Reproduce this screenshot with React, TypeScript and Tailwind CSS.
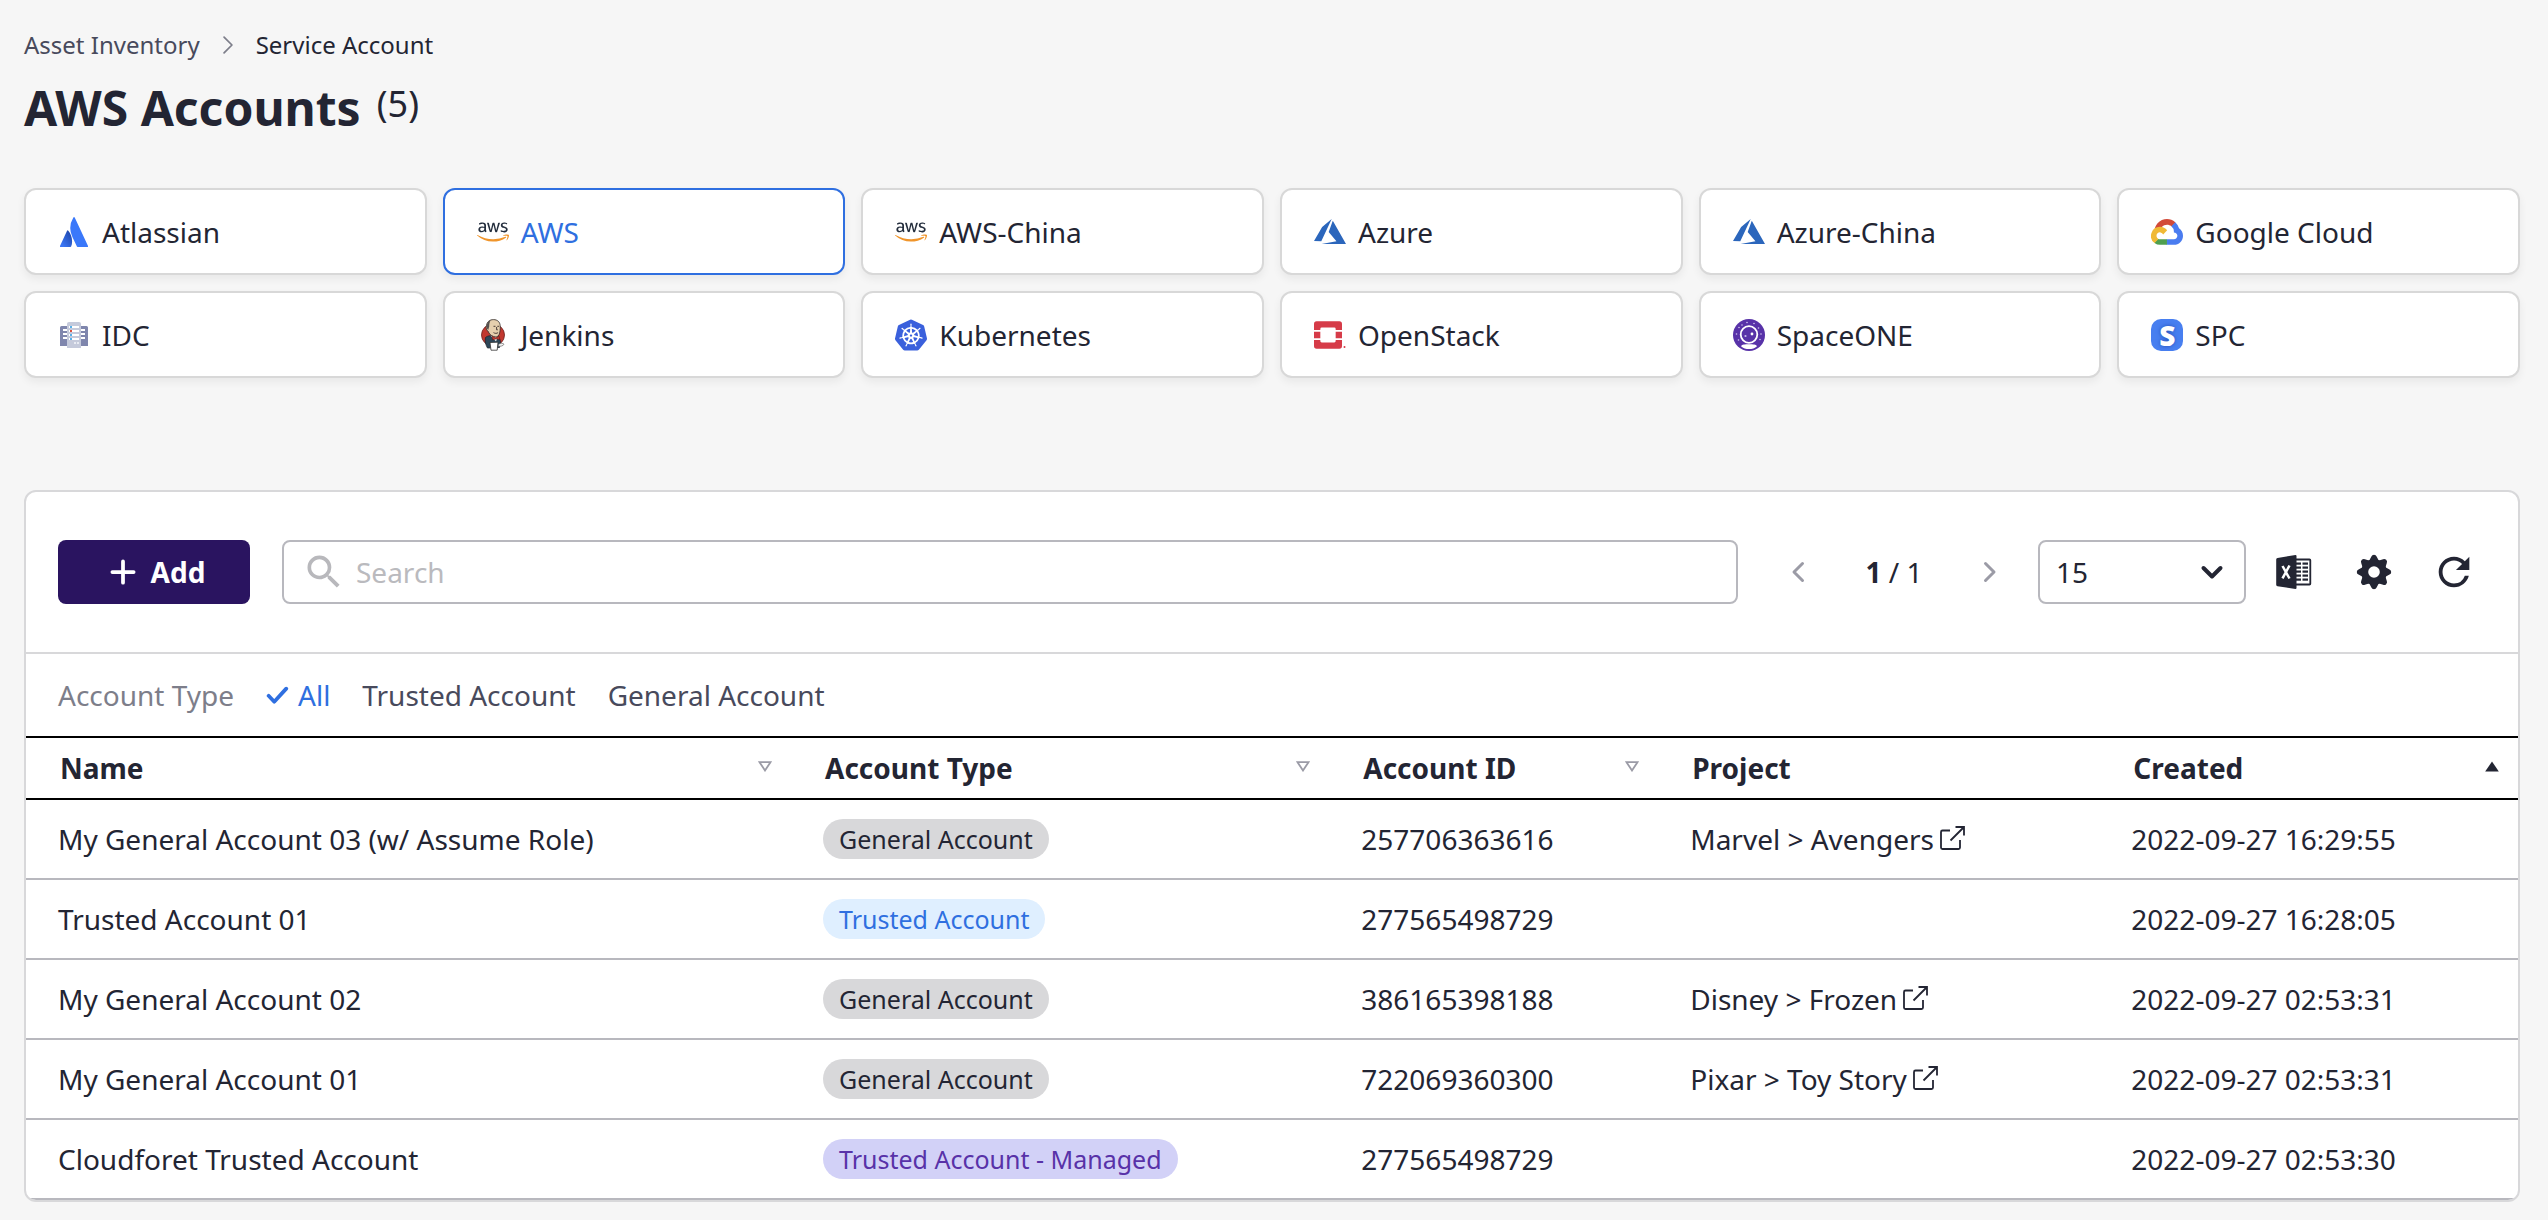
import { useId, useState } from "react";
import type { ReactNode } from "react";
import { SiKubernetes, SiOpenstack } from "react-icons/si";
import { FaAws } from "react-icons/fa";
import { MdRefresh, MdSearch } from "react-icons/md";

/* ---------- provider logos ---------- */

function AtlassianLogo() {
  const id = useId();
  return (
    <svg viewBox="0 0 24 24" preserveAspectRatio="none" className="h-[30px] w-7" aria-hidden="true">
      <defs>
        <linearGradient id={id} x1="0.9" y1="0.2" x2="0.2" y2="0.9">
          <stop offset="0" stopColor="#2049b0" />
          <stop offset="1" stopColor="#3a76f5" />
        </linearGradient>
      </defs>
      <path
        fill={`url(#${id})`}
        d="M7.12 11.084a.683.683 0 0 0-1.16.126L.075 22.974a.703.703 0 0 0 .63 1.018h8.19a.678.678 0 0 0 .63-.39c1.767-3.65.696-9.203-2.406-12.52z"
      />
      <path
        fill="#3a78fa"
        d="M11.434.386a15.515 15.515 0 0 0-.906 15.317l3.95 7.9a.703.703 0 0 0 .628.388h8.19a.703.703 0 0 0 .63-1.017L12.63.38a.664.664 0 0 0-1.196.006z"
      />
    </svg>
  );
}

function AwsLogo() {
  const id = useId();
  return (
    <>
      <svg className="absolute size-0" aria-hidden="true">
        <defs>
          <linearGradient id={id} x1="0" y1="0" x2="0" y2="1">
            <stop offset="0.6" stopColor="#252f3e" />
            <stop offset="0.6" stopColor="#f0952b" />
          </linearGradient>
        </defs>
      </svg>
      <FaAws size={32} fill={`url(#${id})`} aria-hidden="true" />
    </>
  );
}

function AzureLogo() {
  return (
    <svg viewBox="2 4.24 20 15.52" className="h-[25px] w-8" fill="#2b66bc" aria-hidden="true">
      <path d="M13.05 4.24 6.56 18.05 2 18l5.09-8.76 5.96-5zm.7 1.09L22 19.76H6.74l9.3-1.66-4.87-5.79 2.58-7z" />
    </svg>
  );
}

function GoogleCloudLogo() {
  return (
    <svg viewBox="0 0 256 206" className="h-[26px] w-8" aria-hidden="true">
      <path
        fill="#d24a38"
        d="M170.25 56.82 192.5 34.57l1.49-9.37C153.44-11.68 88.98-7.5 52.42 33.92 42.27 45.42 34.73 59.76 30.72 74.57l7.97-1.12 44.5-7.34 3.44-3.51c19.8-21.74 53.27-24.67 76.13-6.17l7.49.39Z"
      />
      <path
        fill="#4a7cf0"
        d="M224.2 73.92a100.25 100.25 0 0 0-30.21-48.72l-31.23 31.23a55.52 55.52 0 0 1 20.38 44.04v5.54c15.35 0 27.8 12.45 27.8 27.8 0 15.35-12.45 27.48-27.8 27.48h-55.67L122 167.22v33.34l5.47 5.23h55.67c39.93.31 72.55-31.49 72.86-71.42a72.3 72.3 0 0 0-31.8-60.45"
      />
      <path
        fill="#4f9f4f"
        d="M71.87 205.8h55.6v-44.51h-55.6c-3.96 0-7.8-.85-11.4-2.5l-7.89 2.42-22.4 22.25-1.96 7.58a72.22 72.22 0 0 0 43.65 14.76"
      />
      <path
        fill="#f0b935"
        d="M71.87 61.43A72.3 72.3 0 0 0 28.22 191.04l32.25-32.25a27.8 27.8 0 1 1 36.78-36.77l32.24-32.25a72.22 72.22 0 0 0-57.62-28.34"
      />
    </svg>
  );
}

function IdcLogo() {
  return (
    <svg viewBox="0 0 28 26" className="h-[26px] w-7" aria-hidden="true">
      <path d="M1.500 4H8v20H0V5.500A1.500 1.500 0 0 1 1.500 4Z" fill="#7f86ad" />
      <path d="M20 4h6.500A1.500 1.500 0 0 1 28 5.500V24h-8Z" fill="#7f86ad" />
      {[7, 11, 15].map((y) => (
        <g key={y} fill="#fff">
          <rect x="3" y={y} width="4" height="2" />
          <rect x="21" y={y} width="4" height="2" />
        </g>
      ))}
      <path d="M9 0h10a2 2 0 0 1 2 2v24H7V2a2 2 0 0 1 2-2Z" fill="#c5cadb" />
      {[4, 8, 12, 16].map((y, i) => (
        <g key={y}>
          <rect x="9" y={y} width="10" height="2" fill="#fff" />
          <rect x="10" y={y} width="2" height="2" fill={i === 1 ? "#d9503f" : "#58b0e8"} />
        </g>
      ))}
      <rect x="14" y="20" width="2" height="2" fill="#e8ebf2" />
      <rect x="17" y="20" width="2" height="2" fill="#e8ebf2" />
    </svg>
  );
}

function JenkinsLogo() {
  return (
    <svg viewBox="0 0 24 32" className="h-8 w-6" aria-hidden="true">
      <ellipse cx="12" cy="16" rx="11.500" ry="11" fill="#c2382f" stroke="#6b231f" strokeWidth="0.8" />
      <path d="M4.500 18.500c2-1.800 5-2 7.500-1.500 4 .2 7 2 7.500 5.500l-1 6-12 .5c-1.800-3-2.800-7-2-10.500Z" fill="#2c4658" stroke="#1f2630" strokeWidth="0.8" />
      <path d="m9.500 16.500 5.500 6 2-5.500Z" fill="#f3f1ee" />
      <path
        d="M5.500 6.500C6 2.500 9 .6 12.500.6c4 0 6.500 2.400 6.700 6.200.2 3.500-.2 6.600-1.200 9-1 2.200-3.200 2.400-5.400 1.700-2.800-1-4.600-2.700-5.400-5.200-1.800-.5-2.500-3.500-1.700-5.800Z"
        fill="#e5cfae"
        stroke="#2e2a2a"
        strokeWidth="0.8"
      />
      <path d="M6 9.500C5 6 6.500 2.500 9.500 1.400 8.500 3.500 8.200 5 8.200 7.500L7.200 11Z" fill="#55504f" />
      <path d="M12.500 7.300h2M16.300 7.300h1.700M15.600 8v2.800h1.200M12.500 13.600c1.500 1 3.300 1 4.600 0" fill="none" stroke="#3a2f2b" strokeWidth="0.9" />
      <path d="m11 17.300 3.600 1.500 3.600-1.500.6 3.200-3.800-.7-3.400 1.200Z" fill="#c2382f" stroke="#5e1b18" strokeWidth="0.6" />
      <path d="m9 23.500 8-.3-.8 8H10Z" fill="#fff" stroke="#333" strokeWidth="0.8" />
      <path d="M17.500 25.500c1.500-1.500 4.500-1.500 5.500-.3-.5 1.600-3.500 2.400-5.800 2Z" fill="#f2f2f2" stroke="#555" strokeWidth="0.6" />
    </svg>
  );
}

function OpenStackLogo() {
  return (
    <span className="flex w-8 items-end">
      <SiOpenstack size={28} color="#d63b48" aria-hidden="true" />
      <svg viewBox="0 0 4 4" className="size-1" aria-hidden="true">
        <circle cx="2.500" cy="2" r="1" fill="#d63b48" />
      </svg>
    </span>
  );
}

function SpaceOneLogo() {
  return (
    <svg viewBox="0 0 32 32" className="size-8" aria-hidden="true">
      <circle cx="16" cy="16" r="16" fill="#5832a8" />
      <circle cx="16" cy="15.500" r="8.300" fill="none" stroke="#fff" strokeWidth="1.800" />
      <path d="M8 27.200c1.300-1.800 3.500-1.900 8-1.900s6.700.1 8 1.900C22 29.200 19 30 16 30s-6-.8-8-2.800Z" fill="#fff" />
      <path d="M9.500 11.500a7.600 7.600 0 0 0 1 9.500c-2.500-2-3.500-6-1-9.500Z" fill="#fff" />
      <circle cx="12.500" cy="17" r="1.100" fill="#c9bcec" />
      <circle cx="19" cy="15" r="1.400" fill="#fff" />
      {[
        [14, 3.500], [21, 4.500], [25.500, 9], [28, 15], [6, 8.500], [3.500, 15], [9, 6], [5.500, 21], [27, 20.500],
      ].map(([x, y]) => (
        <circle key={`${x}-${y}`} cx={x} cy={y} r="0.8" fill="#cfc3ef" />
      ))}
    </svg>
  );
}

function SpcLogo() {
  return (
    <span
      aria-hidden="true"
      className="flex size-8 items-center justify-center rounded-[10px] bg-[#487ff0] text-[28px] leading-8 font-black text-white [text-shadow:0_0_4px_#2552b8]"
    >
      S
    </span>
  );
}

/* ---------- interface icons ---------- */

function Chevron({ className, d, stroke, width = 4 }: { className: string; d: string; stroke: string; width?: number }) {
  return (
    <svg viewBox="0 0 32 32" className={className} fill="none" stroke={stroke} strokeWidth={width} strokeLinecap="round" strokeLinejoin="round" aria-hidden="true">
      <path d={d} />
    </svg>
  );
}

function ExcelIcon() {
  return (
    <svg viewBox="0 0 36 36" className="size-9" aria-hidden="true">
      <path d="M19 5.500h14.500a.8.800 0 0 1 .8.800v23.400a.8.800 0 0 1-.8.800H19" fill="none" stroke="#232533" strokeWidth="1.800" />
      {[8, 12, 16, 20, 24].map((y) => (
        <g key={y} fill="#232533">
          <rect x="20" y={y + 0.5} width="5" height="2.200" />
          <rect x="26.500" y={y + 0.5} width="5.500" height="2.200" />
        </g>
      ))}
      <path d="M1.500 4 19.500 1a1 1 0 0 1 1 1v32a1 1 0 0 1-1 1L1.500 32.200A1.500 1.500 0 0 1 .2 30.700V5.500A1.500 1.500 0 0 1 1.500 4Z" fill="#232533" />
      <path d="m6.500 12 7 12.500M13.500 11.500l-7 12.800" stroke="#fff" strokeWidth="2.500" fill="none" />
    </svg>
  );
}

function GearIcon() {
  return (
    <svg viewBox="-18 -18 36 36" className="size-9" aria-hidden="true">
      <circle r="9.300" fill="none" stroke="#232533" strokeWidth="7" />
      {[0, 45, 90, 135, 180, 225, 270, 315].map((a) => (
        <path key={a} transform={`rotate(${a})`} d="M-5-11-2.600-15.500Q-2-17.200 0-17.200T2.600-15.500L5-11Z" fill="#232533" />
      ))}
    </svg>
  );
}

function ExternalLinkIcon() {
  return (
    <svg viewBox="0 0 28 28" className="size-7" fill="none" stroke="#232533" strokeWidth="1.800" aria-hidden="true">
      <path d="M12 5.500H4.500A1.500 1.500 0 0 0 3 7v15.500A1.500 1.500 0 0 0 4.500 24h16a1.500 1.500 0 0 0 1.500-1.500V15" />
      <path d="M12.500 15.500 26 2M17.500 2H26v8.500" />
    </svg>
  );
}

function SortIcon({ active }: { active?: boolean }) {
  return (
    <svg viewBox="0 0 14 11" className="mb-1 h-[11px] w-3.5 shrink-0" aria-hidden="true">
      {active ? (
        <path d="M7 .5 13.800 10.500H.2Z" fill="#232533" />
      ) : (
        <path d="M1.500 1.200h11L7 9.500Z" fill="none" stroke="#9b9ba6" strokeWidth="1.800" />
      )}
    </svg>
  );
}

/* ---------- data ---------- */

const providers: { name: string; logo: ReactNode }[] = [
  { name: "Atlassian", logo: <AtlassianLogo /> },
  { name: "AWS", logo: <AwsLogo /> },
  { name: "AWS-China", logo: <AwsLogo /> },
  { name: "Azure", logo: <AzureLogo /> },
  { name: "Azure-China", logo: <AzureLogo /> },
  { name: "Google Cloud", logo: <GoogleCloudLogo /> },
  { name: "IDC", logo: <IdcLogo /> },
  { name: "Jenkins", logo: <JenkinsLogo /> },
  { name: "Kubernetes", logo: <SiKubernetes size={32} color="#3a60dc" aria-hidden="true" /> },
  { name: "OpenStack", logo: <OpenStackLogo /> },
  { name: "SpaceONE", logo: <SpaceOneLogo /> },
  { name: "SPC", logo: <SpcLogo /> },
];

type Kind = "General Account" | "Trusted Account" | "Trusted Account - Managed";

const badgeStyle: Record<Kind, string> = {
  "General Account": "bg-[#d8d8da] text-[#232533]",
  "Trusted Account": "bg-[#dfefff] text-[#2f6fe0]",
  "Trusted Account - Managed": "bg-[#d2d1f7] text-[#5832a8]",
};

const rows: { name: string; kind: Kind; id: string; project?: string; created: string }[] = [
  { name: "My General Account 03 (w/ Assume Role)", kind: "General Account", id: "257706363616", project: "Marvel > Avengers", created: "2022-09-27 16:29:55" },
  { name: "Trusted Account 01", kind: "Trusted Account", id: "277565498729", created: "2022-09-27 16:28:05" },
  { name: "My General Account 02", kind: "General Account", id: "386165398188", project: "Disney > Frozen", created: "2022-09-27 02:53:31" },
  { name: "My General Account 01", kind: "General Account", id: "722069360300", project: "Pixar > Toy Story", created: "2022-09-27 02:53:31" },
  { name: "Cloudforet Trusted Account", kind: "Trusted Account - Managed", id: "277565498729", created: "2022-09-27 02:53:30" },
];

const columns: { label: string; width: string; sort: "none" | "idle" | "active" }[] = [
  { label: "Name", width: "w-[30.7%]", sort: "idle" },
  { label: "Account Type", width: "w-[21.6%]", sort: "idle" },
  { label: "Account ID", width: "w-[13.2%]", sort: "idle" },
  { label: "Project", width: "w-[17.7%]", sort: "none" },
  { label: "Created", width: "w-[16.8%]", sort: "active" },
];

const filters = ["All", "Trusted Account", "General Account"];

/* ---------- page ---------- */

export default function App() {
  const [provider, setProvider] = useState("AWS");
  const [filter, setFilter] = useState("All");
  const [query, setQuery] = useState("");

  return (
    <div className="min-h-screen bg-[#f6f6f6] px-6 pt-[30px] pr-7 pb-4 font-['Noto_Sans',sans-serif] text-[28px] leading-[42px] text-[#232533]">
      <nav aria-label="Breadcrumb" className="flex items-center text-[24px] leading-[30px]">
        <a href="#asset-inventory" className="text-[#484a5c]">Asset Inventory</a>
        <Chevron className="mx-[14px] size-7" d="m11.500 7 9 9-9 9" stroke="#7d7e8a" width={2} />
        <a href="#service-account" aria-current="page">Service Account</a>
      </nav>

      <div className="mt-[18px] flex items-start gap-4">
        <h1 className="text-[48px] leading-[60px] font-bold">AWS Accounts</h1>
        <span className="text-[36px] leading-[52px]">(5)</span>
      </div>

      <div className="mt-[50px] grid grid-cols-6 gap-4">
        {providers.map(({ name, logo }) => (
          <button
            key={name}
            type="button"
            aria-pressed={provider === name}
            onClick={() => setProvider(name)}
            className={`flex h-[87px] items-center gap-3 rounded-xl border-2 bg-white px-8 shadow-[0_4px_8px_rgba(0,0,0,0.06)] ${
              provider === name ? "border-[#2f6fe0] text-[#2f6fe0]" : "border-[#d8d8d8]"
            }`}
          >
            <span className="flex w-8 shrink-0 items-center justify-center">{logo}</span>
            {name}
          </button>
        ))}
      </div>

      <main className="mt-28 overflow-hidden rounded-xl border-2 border-[#d8d8da] bg-white">
        <div className="flex items-center px-8 py-12">
          <button type="button" className="flex h-16 w-48 items-center justify-center gap-2 rounded-lg bg-[#2a1460] font-bold text-white">
            <Chevron className="size-10" d="M16 7.500v17M7.500 16h17" stroke="#ffffff" width={3} />
            Add
          </button>
          <div className="ml-8 flex h-16 flex-1 items-center gap-2.5 rounded-lg border-2 border-[#b8b8be] pr-4 pl-[18px]">
            <MdSearch size={44} color="#b8b8bc" aria-hidden="true" />
            <input
              type="text"
              aria-label="Search"
              placeholder="Search"
              value={query}
              onChange={(e) => setQuery(e.target.value)}
              className="min-w-0 flex-1 bg-transparent outline-none placeholder:text-[#bababe]"
            />
          </div>
          <div className="mr-4 ml-7 flex items-center">
            <button type="button" aria-label="Previous page" className="flex size-16 items-center justify-center">
              <Chevron className="size-8" d="M20.500 7.500 12 16l8.500 8.500" stroke="#9b9ba6" width={3} />
            </button>
            <span className="w-32 text-center">
              <b>1</b> / 1
            </span>
            <button type="button" aria-label="Next page" className="flex size-16 items-center justify-center">
              <Chevron className="size-8" d="M11.500 7.500 20 16l-8.500 8.500" stroke="#9b9ba6" width={3} />
            </button>
          </div>
          <div className="relative">
            <select aria-label="Rows per page" defaultValue="15" className="h-16 w-52 appearance-none rounded-lg border-2 border-[#b8b8be] bg-white px-4">
              <option>15</option>
              <option>30</option>
              <option>45</option>
            </select>
            <Chevron className="pointer-events-none absolute top-4 right-[18px] size-8" d="m7.500 12 8.500 8.500 8.500-8.500" stroke="#232533" width={4} />
          </div>
          <div className="ml-4 flex gap-4">
            <button type="button" aria-label="Export to Excel" className="flex size-16 items-center justify-center">
              <ExcelIcon />
            </button>
            <button type="button" aria-label="Settings" className="flex size-16 items-center justify-center">
              <GearIcon />
            </button>
            <button type="button" aria-label="Refresh" className="flex size-16 items-center justify-center">
              <MdRefresh size={46} aria-hidden="true" />
            </button>
          </div>
        </div>

        <div className="flex h-[84px] items-center gap-8 border-t-2 border-[#d8d8da] px-8 text-[#484a5c]">
          <span className="text-[#7d7e8a]">Account Type</span>
          {filters.map((name) => (
            <button
              key={name}
              type="button"
              aria-pressed={filter === name}
              onClick={() => setFilter(name)}
              className={`flex items-center gap-2 ${filter === name ? "text-[#2f6fe0]" : ""}`}
            >
              {filter === name && <Chevron className="size-6" d="m3.500 17 7.500 8L27 7.500" stroke="#2f6fe0" width={5} />}
              {name}
            </button>
          ))}
        </div>

        <table className="w-full table-fixed text-left">
          <thead>
            <tr className="h-[62px] border-y-2 border-black">
              {columns.map(({ label, width, sort }) => (
                <th key={label} scope="col" aria-sort={sort === "active" ? "ascending" : undefined} className={`${width} p-0 pr-[19px] pl-[34px] font-bold`}>
                  <div className="flex items-center justify-between">
                    {label}
                    {sort !== "none" && <SortIcon active={sort === "active"} />}
                  </div>
                </th>
              ))}
            </tr>
          </thead>
          <tbody>
            {rows.map((row) => (
              <tr key={row.name} className="h-20 border-b-2 border-[#b8b8be]">
                <td className="p-0 pl-8">{row.name}</td>
                <td className="p-0 pl-8">
                  <span className={`flex h-10 w-fit items-center rounded-full px-4 text-[25px] ${badgeStyle[row.kind]}`}>{row.kind}</span>
                </td>
                <td className="p-0 pl-8">{row.id}</td>
                <td className="p-0 pl-8">
                  {row.project && (
                    <a href="#project" className="flex items-center gap-1">
                      {row.project}
                      <ExternalLinkIcon />
                    </a>
                  )}
                </td>
                <td className="p-0 pl-8">{row.created}</td>
              </tr>
            ))}
          </tbody>
        </table>
      </main>
    </div>
  );
}
